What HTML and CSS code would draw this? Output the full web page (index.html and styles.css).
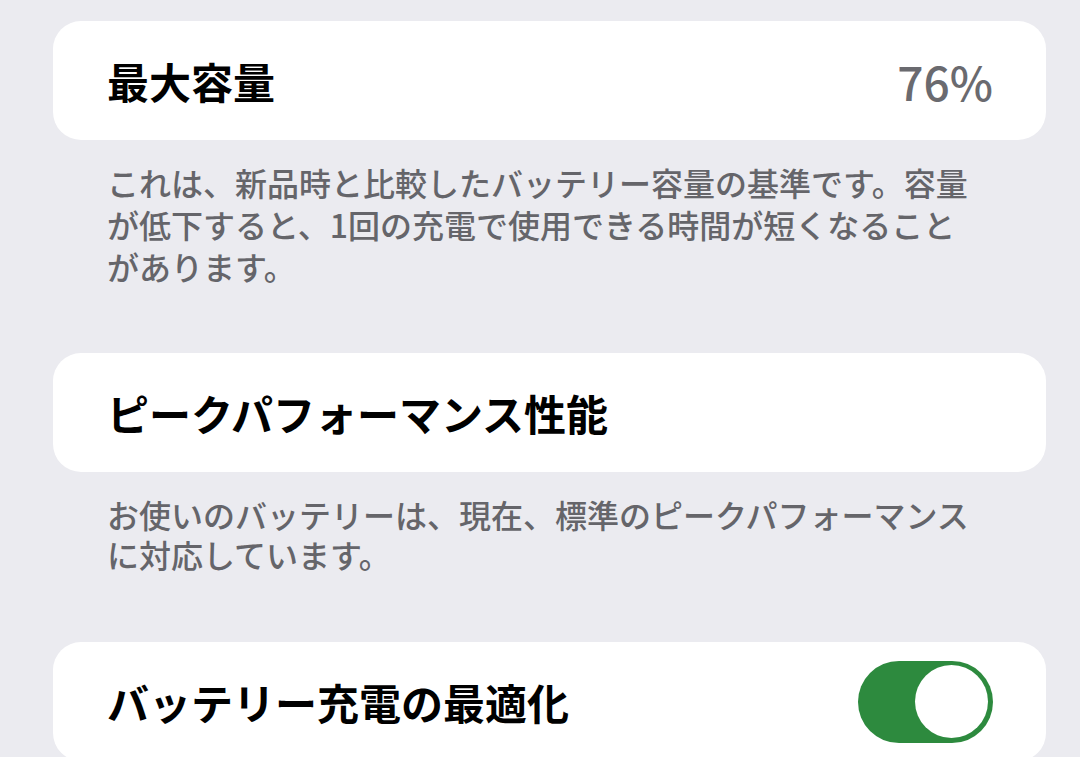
FILE: index.html
```html
<!DOCTYPE html>
<html lang="ja">
<head>
<meta charset="utf-8">
<title>バッテリーの状態</title>
<link rel="stylesheet" href="styles.css">
</head>
<body>
<main class="page">
  <section class="group">
    <div class="card">
      <span class="title">最大容量</span>
      <span class="value">76%</span>
    </div>
    <p class="footer">これは、新品時と比較したバッテリー容量の基準です。容量が低下すると、1回の充電で使用できる時間が短くなることがあります。</p>
  </section>
  <section class="group">
    <div class="card">
      <span class="title">ピークパフォーマンス性能</span>
    </div>
    <p class="footer footer-tight">お使いのバッテリーは、現在、標準のピークパフォーマンスに対応しています。</p>
  </section>
  <section class="group">
    <div class="card">
      <span class="title">バッテリー充電の最適化</span>
      <span class="switch on"><span class="knob"></span></span>
    </div>
  </section>
</main>
</body>
</html>
```
FILE: styles.css
```css
html, body {
  margin: 0;
  padding: 0;
}
body {
  background: #ebebf0;
  font-family: "Noto Sans CJK JP", "Noto Sans", sans-serif;
  height: 757px;
  overflow: hidden;
}
.page {
  padding: 21px 34px 0 53px;
  display: flex;
  flex-direction: column;
  gap: 66px;
}
.group {
  display: flex;
  flex-direction: column;
}
.card {
  background: #ffffff;
  border-radius: 28px;
  height: 119px;
  box-sizing: border-box;
  padding: 0 53px 0 54px;
  display: flex;
  align-items: center;
  justify-content: space-between;
}
.title {
  font-size: 42px;
  font-weight: 700;
  color: #000000;
  line-height: 1;
}
.value {
  font-size: 46px;
  font-weight: 500;
  color: #6a6a6f;
  line-height: 1;
}
.footer {
  margin: 0;
  padding: 21px 0 0 54px;
  width: 872px;
  font-size: 32px;
  line-height: 42px;
  font-weight: 500;
  color: #65656a;
}
.footer-tight {
  padding-top: 22px;
  line-height: 40px;
  padding-bottom: 2px;
}
.switch {
  width: 135px;
  height: 82px;
  border-radius: 41px;
  background: #2d8a3e;
  display: flex;
  align-items: center;
  justify-content: flex-end;
  padding: 0 5px;
  box-sizing: border-box;
}
.knob {
  width: 73px;
  height: 73px;
  border-radius: 50%;
  background: #ffffff;
}
```
